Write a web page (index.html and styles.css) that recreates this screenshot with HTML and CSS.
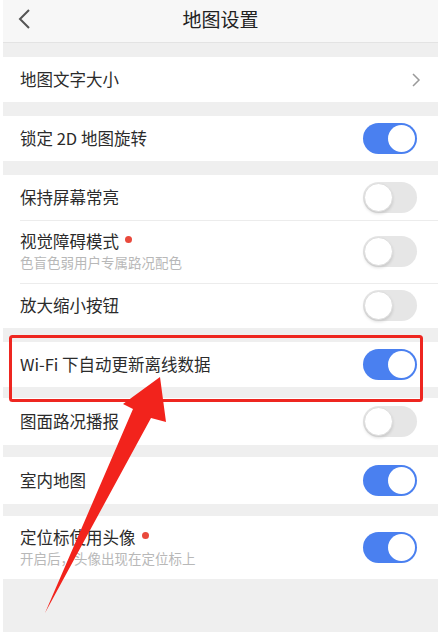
FILE: index.html
```html
<!DOCTYPE html>
<html lang="zh-CN">

<head>
  <meta charset="UTF-8" />
  <meta name="viewport" content="width=device-width, initial-scale=1" />
  <title>地图设置</title>
  <link rel="stylesheet" href="styles.css">
</head>

<body>
  <div class="screen">
    <div class="topbar">
      <svg class="back" width="14" height="22" viewBox="0 0 14 22">
        <polyline points="11,2 2,11 11,20" fill="none" stroke="#555" stroke-width="2" />
      </svg>
      <h1>地图设置</h1>
    </div>

    <div class="group">
      <div class="row">
        <span class="label">地图文字大小</span>
        <svg class="arrow-right" width="9" height="14" viewBox="0 0 9 14">
          <polyline points="1,1 7,7 1,13" fill="none" stroke="#9a9a9a" stroke-width="1.5" />
        </svg>
      </div>
    </div>

    <div class="group">
      <div class="row">
        <span class="label">锁定 2D 地图旋转</span>
        <span class="switch on"></span>
      </div>
    </div>

    <div class="group">
      <div class="row">
        <span class="label">保持屏幕常亮</span>
        <span class="switch"></span>
      </div>
      <div class="row tall">
        <div class="text">
          <span class="label">视觉障碍模式<i class="dot"></i></span>
          <span class="sub">色盲色弱用户专属路况配色</span>
        </div>
        <span class="switch"></span>
      </div>
      <div class="row">
        <span class="label">放大缩小按钮</span>
        <span class="switch"></span>
      </div>
    </div>

    <div class="group">
      <div class="row">
        <span class="label">Wi-Fi 下自动更新离线数据</span>
        <span class="switch on"></span>
      </div>
    </div>

    <div class="group thin">
      <div class="row">
        <span class="label">图面路况播报</span>
        <span class="switch"></span>
      </div>
    </div>

    <div class="group thin">
      <div class="row">
        <span class="label">室内地图</span>
        <span class="switch on"></span>
      </div>
    </div>

    <div class="group">
      <div class="row tall">
        <div class="text">
          <span class="label">定位标使用头像<i class="dot"></i></span>
          <span class="sub">开启后，头像出现在定位标上</span>
        </div>
        <span class="switch on"></span>
      </div>
    </div>

    <!-- 标注：红框 + 箭头 -->
    <svg class="mark" width="435" height="632" viewBox="0 0 435 632">
      <rect x="7.5" y="336.5" width="411" height="64" rx="2" fill="none" stroke="#ee2620" stroke-width="3" />
      <polygon points="157,377 163,422 148,418 42,613 130,409 120,404" fill="#f2231c" />
    </svg>
  </div>
</body>

</html>
```

FILE: styles.css
```css
body {
  margin: 0;
  background-color: #fff;
  font-family: "Noto Sans CJK SC", "Noto Sans", sans-serif;
  color: #2b2b2b;
}

.screen {
  position: relative;
  width: 435px;
  height: 632px;
  margin-left: 3px;
  background-color: #efefef;
  overflow: hidden;
}

.topbar {
  height: 42px;
  display: flex;
  align-items: center;
  justify-content: center;
  background-color: #f7f7f7;
  border-bottom: 1px solid #e3e3e3;
  position: relative;
}

.topbar h1 {
  margin: 0;
  font-size: 19px;
  font-weight: normal;
  color: #222;
  line-height: 1;
  margin-top: -6px;
}

.back {
  position: absolute;
  left: 15px;
  top: 8px;
}

.group {
  margin-top: 14px;
  background-color: #fff;
}

.group.thin {
  margin-top: 11px;
}

.group.thin + .group {
  margin-top: 12px;
}

.row {
  height: 45px;
  display: flex;
  align-items: center;
  justify-content: space-between;
  padding: 0 21px 0 17px;
  position: relative;
}

.thin .row {
  height: 47px;
}

.row + .row::before {
  content: "";
  position: absolute;
  left: 17px;
  right: 0;
  top: 0;
  border-top: 1px solid #ececec;
}

.row.tall {
  height: 63px;
}

.label {
  font-size: 16.5px;
  line-height: 1;
  display: flex;
  align-items: center;
}

.text {
  display: flex;
  flex-direction: column;
  gap: 7px;
  margin-top: -1px;
}

.sub {
  font-size: 13.5px;
  color: #b8b8b8;
  line-height: 1;
}

.dot {
  width: 7px;
  height: 7px;
  border-radius: 50%;
  background-color: #e9493c;
  margin-left: 6px;
  margin-top: -3px;
}

.arrow-right {
  margin-right: -4px;
}

.switch {
  width: 54px;
  height: 31px;
  border-radius: 16px;
  background-color: #e6e6e6;
  position: relative;
  box-sizing: border-box;
}

.switch::after {
  content: "";
  position: absolute;
  top: 1px;
  left: 1px;
  width: 29px;
  height: 29px;
  border-radius: 50%;
  background-color: #fff;
  box-sizing: border-box;
  border: 1px solid #dcdcdc;
  box-shadow: 0 2px 3px rgba(0, 0, 0, 0.12);
}

.switch.on {
  background-color: #4a80f0;
}

.switch.on::after {
  left: auto;
  right: 2px;
  top: 2px;
  width: 27px;
  height: 27px;
  border: none;
  box-shadow: none;
}

.mark {
  position: absolute;
  left: 0;
  top: 0;
  pointer-events: none;
}
```
